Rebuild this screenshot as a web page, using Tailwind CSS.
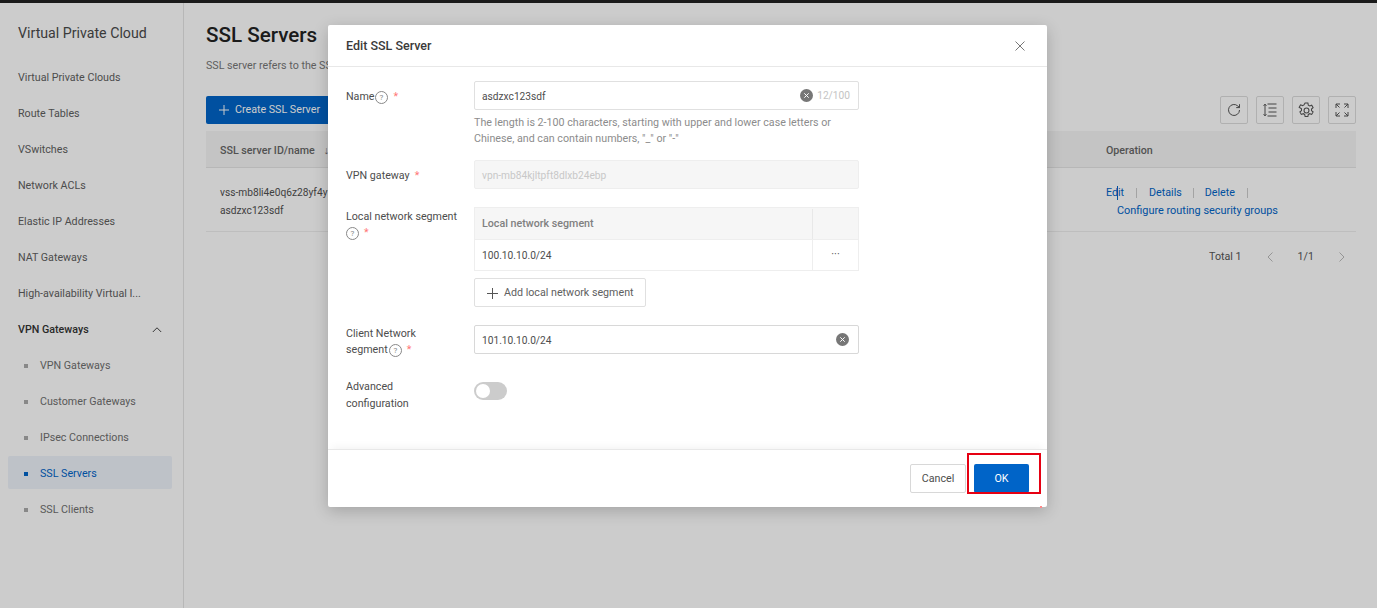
<!DOCTYPE html>
<html>
<head>
<meta charset="utf-8">
<script src="https://cdn.jsdelivr.net/npm/@tailwindcss/browser@4"></script>
</head>
<body class="h-[608px] w-[1377px] overflow-hidden bg-white font-['Roboto',sans-serif] text-[10.7px] text-[#333]">
<div class="relative h-[608px] w-[1377px] overflow-hidden">
  <div class="h-[3px] bg-[#1a1a1a]"></div>
  <div class="flex h-[605px]">
    <!-- sidebar -->
    <aside class="w-[184px] shrink-0 border-r border-[#e5e5e5] pt-[20px] text-[#606060]">
      <div class="h-[20px] pl-[18px] text-[14.2px] leading-[20px] text-[#4a4a4a]">Virtual Private Cloud</div>
      <nav class="mt-[17px]">
        <a class="flex h-[36px] items-center pl-[18px]">Virtual Private Clouds</a>
        <a class="flex h-[36px] items-center pl-[18px]">Route Tables</a>
        <a class="flex h-[36px] items-center pl-[18px]">VSwitches</a>
        <a class="flex h-[36px] items-center pl-[18px]">Network ACLs</a>
        <a class="flex h-[36px] items-center pl-[18px]">Elastic IP Addresses</a>
        <a class="flex h-[36px] items-center pl-[18px]">NAT Gateways</a>
        <a class="flex h-[36px] items-center pl-[18px]">High-availability Virtual I...</a>
        <a class="flex h-[36px] items-center justify-between pl-[18px] pr-[21px] font-medium text-[#333]">VPN Gateways
          <svg class="h-[10px] w-[10px]" viewBox="0 0 10 10" fill="none" stroke="#444" stroke-width="1"><path d="M.8 7 5 2.800 9.200 7"/></svg>
        </a>
        <a class="flex h-[36px] items-center pl-[24px] text-[#707070]"><span class="mr-[12px] h-[4px] w-[4px] bg-[#aaa]"></span>VPN Gateways</a>
        <a class="flex h-[36px] items-center pl-[24px] text-[#707070]"><span class="mr-[12px] h-[4px] w-[4px] bg-[#aaa]"></span>Customer Gateways</a>
        <a class="flex h-[36px] items-center pl-[24px] text-[#707070]"><span class="mr-[12px] h-[4px] w-[4px] bg-[#aaa]"></span>IPsec Connections</a>
        <a class="mx-[8px] mb-[3px] flex h-[33px] w-[164px] items-center rounded-[2px] bg-[#eef3fb] pl-[16px] pt-[3px] text-[#0064c8]"><span class="mr-[12px] h-[4px] w-[4px] bg-[#0064c8]"></span>SSL Servers</a>
        <a class="flex h-[36px] items-center pl-[24px] text-[#707070]"><span class="mr-[12px] h-[4px] w-[4px] bg-[#aaa]"></span>SSL Clients</a>
      </nav>
    </aside>
    <!-- main -->
    <main class="w-[1172px] pl-[22px] pt-[16px]">
      <h1 class="h-[32px] text-[20.6px] font-medium leading-[32px] text-[#222]">SSL Servers</h1>
      <p class="mt-[6px] h-[18px] leading-[18px] text-[#777]">SSL server refers to the SSL-VPN server.</p>
      <div class="mt-[21px] flex h-[28px] items-center">
        <button class="flex h-[28px] w-[130px] items-center rounded-[2px] bg-[#0064c8] pl-[13px] text-white">
          <svg class="mr-[6px] h-[10px] w-[10px]" viewBox="0 0 10 10" stroke="#fff" stroke-width="1"><path d="M5 0v10M0 5h10"/></svg>Create SSL Server
        </button>
        <div class="ml-auto flex gap-[8px]">
          <button class="flex h-[28px] w-[28px] items-center justify-center rounded-[2px] border border-[#ddd]">
            <svg class="h-[14px] w-[14px]" viewBox="0 0 14 14" fill="none" stroke="#555" stroke-width="1"><path d="M12.500 7a5.500 5.500 0 1 1-1.700-4L12.500 4.600M12.500 1.200v3.400H9.200"/></svg>
          </button>
          <button class="flex h-[28px] w-[28px] items-center justify-center rounded-[2px] border border-[#ddd]">
            <svg class="h-[14px] w-[14px]" viewBox="0 0 14 14" fill="none" stroke="#555" stroke-width="1"><path d="M4.500 1h9M5.500 5h8M5.500 9h8M4.500 13h9M2 1v12M.6 2.800 2 1.200l1.400 1.600M.6 11.200 2 12.800l1.400-1.600"/></svg>
          </button>
          <button class="flex h-[28px] w-[28px] items-center justify-center rounded-[2px] border border-[#ddd]">
            <svg class="h-[17px] w-[17px]" viewBox="0 0 16 16" fill="none" stroke="#555" stroke-width="1"><path d="M6.700 1h2.600l.4 2 1.300.7 1.900-.7 1.300 2.300-1.500 1.300v1.500l1.500 1.300-1.300 2.300-1.900-.7-1.300.7-.4 2H6.700l-.4-2-1.300-.7-1.900.7-1.300-2.300 1.500-1.300V6.300L1.100 5l1.300-2.300 1.900.7 1.300-.7z"/><circle cx="8" cy="8" r="2.300"/></svg>
          </button>
          <button class="flex h-[28px] w-[28px] items-center justify-center rounded-[2px] border border-[#ddd]">
            <svg class="h-[14px] w-[14px]" viewBox="0 0 14 14" fill="none" stroke="#555" stroke-width="1"><path d="M1 5V1h4M1 1l3.500 3.500M13 5V1H9M13 1 9.500 4.500M1 9v4h4M1 13l3.500-3.500M13 9v4H9M13 13 9.500 9.500"/></svg>
          </button>
        </div>
      </div>
      <div class="mt-[7px] flex h-[37px] items-center border-b border-[#e5e5e5] bg-[#f6f6f6] pl-[14px] pt-[4px] font-medium text-[#666]">
        <span>SSL server ID/name</span><span class="ml-[9px]">↓</span>
        <span class="ml-auto w-[250px]">Operation</span>
      </div>
      <div class="flex h-[64px] items-center border-b border-[#eee] pl-[14px] pt-[4px]">
        <div class="text-[10.2px] leading-[18px] text-[#505050]"><div>vss-mb8li4e0q6z28yf4y</div><div>asdzxc123sdf</div></div>
        <div class="relative ml-auto w-[250px] leading-[18px] text-[#0064c8]">
          <div class="flex items-center"><span>Edit</span><span class="mx-[12px] h-[10px] w-px bg-[#ccc]"></span><span>Details</span><span class="mx-[11px] h-[10px] w-px bg-[#ccc]"></span><span>Delete</span><span class="ml-[12px] h-[10px] w-px bg-[#ccc]"></span></div>
          <div class="pl-[11px] text-[10.9px]">Configure routing security groups</div>
          <span class="absolute left-[11px] top-[2px] h-[14px] w-px bg-[#0064c8]"></span>
        </div>
      </div>
      <div class="flex h-[46px] items-center justify-end pt-[4px] text-[#555]">
        <span>Total 1</span>
        <svg class="ml-[25px] h-[10px] w-[6px]" viewBox="0 0 6 10" fill="none" stroke="#bbb"><path d="M5.500.5 1 5l4.500 4.500"/></svg>
        <span class="ml-[25px]">1/1</span>
        <svg class="ml-[25px] mr-[11px] h-[10px] w-[6px]" viewBox="0 0 6 10" fill="none" stroke="#bbb"><path d="M.5.5 5 5 .5 9.500"/></svg>
      </div>
    </main>
  </div>

  <!-- overlay -->
  <div class="absolute inset-x-0 bottom-0 top-[3px] bg-black/20"></div>

  <!-- modal -->
  <div class="absolute left-[328px] top-[25px] flex h-[482px] w-[719px] flex-col rounded-[2px] bg-white shadow-[0_4px_16px_rgba(0,0,0,0.2)]">
    <header class="flex h-[42px] shrink-0 items-center justify-between border-b border-[#e8e8e8] pl-[18px] pr-[22px] pt-[1px]">
      <span class="text-[12.5px] font-medium text-[#3a3a3a]">Edit SSL Server</span>
      <svg class="h-[10px] w-[10px]" viewBox="0 0 10 10" fill="none" stroke="#777" stroke-width="1"><path d="m.5.500 9 9M9.500.500l-9 9"/></svg>
    </header>
    <div class="flex-1 pl-[18px] pt-[14px] text-[#4d4d4d]">
      <!-- name -->
      <div class="flex">
        <div class="flex h-[29px] w-[128px] items-center pt-[3px]">Name<svg class="ml-[1px] h-[13px] w-[13px]" viewBox="0 0 13 13" fill="none"><circle cx="6.500" cy="6.500" r="6" stroke="#888"/><text x="6.500" y="9.300" text-anchor="middle" font-size="8" fill="#888">?</text></svg><span class="ml-[5px] text-[#f77]">*</span></div>
        <div class="w-[385px]">
          <div class="flex h-[29px] items-center rounded-[2px] border border-[#e0e0e0] pl-[7px] pr-[8px] pt-[3px]">
            <span class="text-[10.2px]">asdzxc123sdf</span>
            <svg class="relative top-[-1.5px] ml-auto h-[13px] w-[13px]" viewBox="0 0 13 13"><circle cx="6.500" cy="6.500" r="6.500" fill="#777"/><path d="m4.300 4.300 4.400 4.400M8.700 4.300l-4.400 4.400" stroke="#fff"/></svg>
            <span class="relative top-[-1.500px] ml-[4px] text-[10.2px] text-[#c4c4c4]">12/100</span>
          </div>
          <p class="mt-[5px] leading-[16px] text-[#8c8c8c]">The length is 2-100 characters, starting with upper and lower case letters or Chinese, and can contain numbers, "_" or "-"</p>
        </div>
      </div>
      <!-- vpn -->
      <div class="mt-[13px] flex">
        <div class="flex h-[29px] w-[128px] items-center pt-[3px]">VPN gateway<span class="ml-[5px] text-[#f77]">*</span></div>
        <div class="flex h-[29px] w-[385px] items-center rounded-[2px] border border-[#eee] bg-[#f6f6f6] pl-[7px] pt-[3px] text-[10.2px] text-[#c8c8c8]">vpn-mb84kjltpft8dlxb24ebp</div>
      </div>
      <!-- local -->
      <div class="mt-[18px] flex">
        <div class="w-[128px] pt-[2px] leading-[16px]">Local network segment<br><span class="inline-flex items-center"><svg class="h-[13px] w-[13px]" viewBox="0 0 13 13" fill="none"><circle cx="6.500" cy="6.500" r="6" stroke="#888"/><text x="6.500" y="9.300" text-anchor="middle" font-size="8" fill="#888">?</text></svg><span class="ml-[5px] text-[#f77]">*</span></span></div>
        <div class="w-[385px]">
          <div class="border border-[#eee]">
            <div class="flex h-[31px] items-center bg-[#f6f6f6] pt-[1px] font-medium text-[#808080]"><span class="flex-1 pl-[7px]">Local network segment</span><span class="h-full w-[46px] border-l border-[#e8e8e8]"></span></div>
            <div class="flex h-[31px] items-center border-t border-[#eee]"><span class="flex-1 pl-[7px] pt-[2px] text-[10.2px]">100.10.10.0/24</span><span class="flex h-full w-[46px] items-center justify-center border-l border-[#eee]">···</span></div>
          </div>
          <button class="mt-[7px] flex h-[29px] w-[172px] items-center whitespace-nowrap rounded-[2px] border border-[#e0e0e0] pl-[12px] pt-[1px] text-[#606060]">
            <svg class="mr-[6px] h-[11px] w-[11px]" viewBox="0 0 11 11" stroke="#555" stroke-width="1"><path d="M5.500 0v11M0 5.500h11"/></svg>Add local network segment
          </button>
        </div>
      </div>
      <!-- client -->
      <div class="mt-[18px] flex">
        <div class="w-[128px] pt-[1px] leading-[16px]">Client Network<br><span class="inline-flex items-center">segment<svg class="ml-[1px] h-[13px] w-[13px]" viewBox="0 0 13 13" fill="none"><circle cx="6.500" cy="6.500" r="6" stroke="#888"/><text x="6.500" y="9.300" text-anchor="middle" font-size="8" fill="#888">?</text></svg><span class="ml-[5px] text-[#f77]">*</span></span></div>
        <div class="flex h-[29px] w-[385px] items-center justify-between rounded-[2px] border border-[#d8d8d8] pl-[7px] pr-[9px] pt-[2px] text-[10.2px]">101.10.10.0/24
          <svg class="relative top-[-1px] h-[13px] w-[13px]" viewBox="0 0 13 13"><circle cx="6.500" cy="6.500" r="6.500" fill="#777"/><path d="m4.300 4.300 4.400 4.400M8.700 4.300l-4.400 4.400" stroke="#fff"/></svg>
        </div>
      </div>
      <!-- advanced -->
      <div class="mt-[24px] flex">
        <div class="-mt-[4px] w-[128px] leading-[17px]">Advanced<br>configuration</div>
        <div class="flex h-[18px] w-[33px] items-center rounded-full bg-[#ccc] pl-[2px]"><span class="h-[14px] w-[14px] rounded-full bg-white"></span></div>
      </div>
    </div>
    <footer class="relative flex h-[58px] shrink-0 items-center justify-end gap-[8px] border-t border-[#e8e8e8] pr-[18px] shadow-[0_-6px_8px_-4px_rgba(0,0,0,0.05)]">
      <button class="flex h-[29px] w-[56px] items-center justify-center rounded-[2px] border border-[#d8d8d8] pt-[1px] text-[#4d4d4d]">Cancel</button>
      <button class="flex h-[29px] w-[55px] items-center justify-center rounded-[2px] bg-[#0064c8] pt-[1px] text-white">OK</button>
    </footer>
  </div>
  <!-- annotation -->
  <div class="absolute left-[967px] top-[453px] h-[41px] w-[74px] border-2 border-[#e60012]"></div>
  <div class="absolute left-[1040px] top-[506px] h-[2px] w-[2px] bg-[#f88]"></div>
</div>
</body>
</html>
